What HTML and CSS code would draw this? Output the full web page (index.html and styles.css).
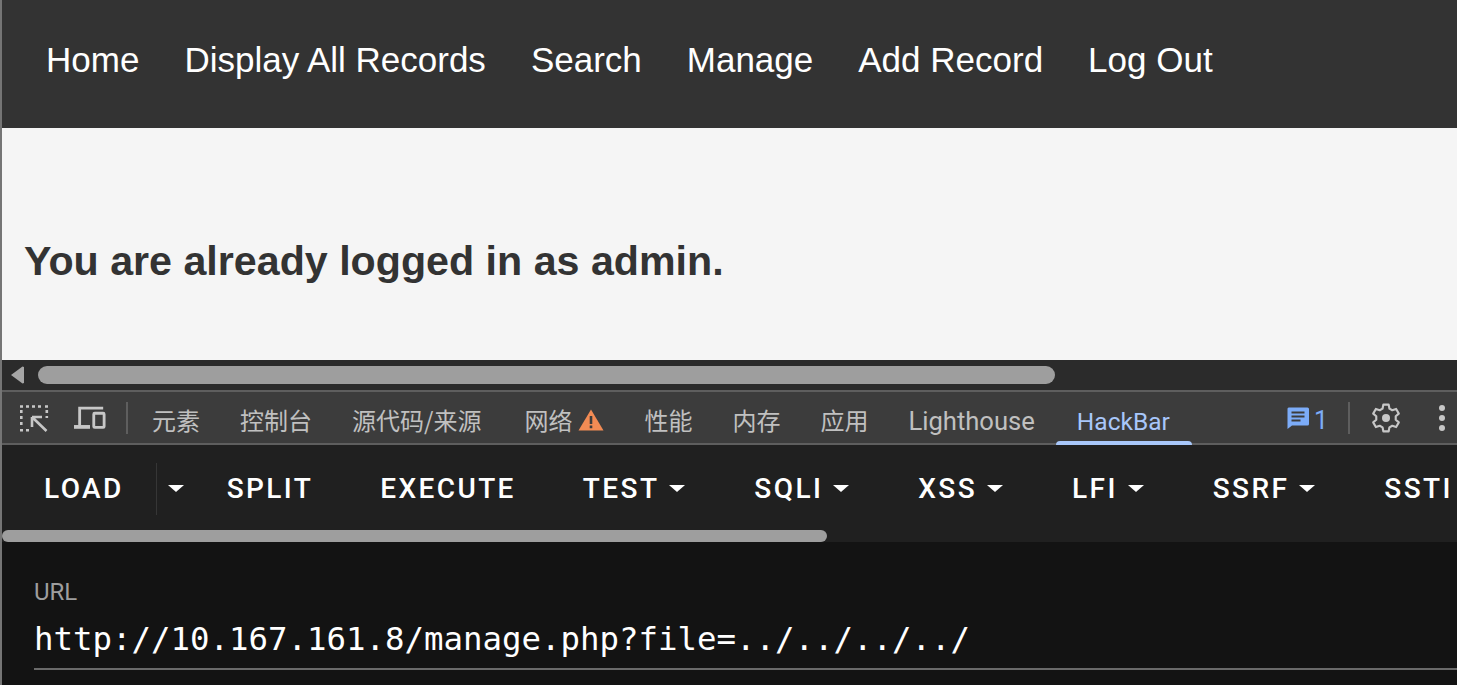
FILE: index.html
```html
<!DOCTYPE html>
<html lang="en">
<head>
    <meta charset="UTF-8">
    <meta name="viewport" content="width=device-width, initial-scale=1.0">
    <title>Manage</title>
    <link rel="stylesheet" href="styles.css">
</head>
<body>
    <div class="window">
        <!-- Страница -->
        <nav class="site-nav">
            <a href="#">Home</a>
            <a href="#">Display All Records</a>
            <a href="#">Search</a>
            <a href="#">Manage</a>
            <a href="#">Add Record</a>
            <a href="#">Log Out</a>
        </nav>
        <main class="content">
            <h2>You are already logged in as admin.</h2>
        </main>
        <div class="page-scroll">
            <svg class="arrow-left" width="15" height="18" viewBox="0 0 15 18"><path d="M14 1 L14 17 L12.500 17.500 L1 9 L12.500 .5 Z" fill="#a6a6a6"/></svg>
            <div class="page-thumb"></div>
        </div>

        <!-- Панель DevTools -->
        <div class="devtools-bar">
            <button class="tool-btn inspect">
                <svg width="30" height="30" viewBox="0 0 30 30" fill="none" stroke="#c7c7c7" stroke-width="2.600">
                    <path d="M1 3.500h3M7 3.500h3M13 3.500h3M19 3.500h3M26 3.500h3M2.300 7v3M2.300 13v3M2.300 19v3M1 27.300h3M7 27.300h3M27.800 7v3M27.800 13v2"/>
                    <path d="M13 14h10M13 14v10M13.500 14.500 L27.500 28"/>
                </svg>
            </button>
            <button class="tool-btn device">
                <svg width="32" height="25" viewBox="0 0 34 26" fill="none" stroke="#c7c7c7" stroke-width="3">
                    <path d="M6 22V3h25"/>
                    <path d="M0 23h17" stroke-width="4"/>
                    <rect x="21" y="8.500" width="11" height="15" rx="1"/>
                </svg>
            </button>
            <span class="bar-sep"></span>
            <div class="tabs">
                <a class="tab" href="#">元素</a>
                <a class="tab" href="#">控制台</a>
                <a class="tab" href="#">源代码/来源</a>
                <a class="tab tab-warn" href="#">网络
                    <svg width="26" height="22" viewBox="0 0 26 22"><path d="M13 .5 L25.500 21.500 H.5 Z" fill="#f28b54"/><path d="M11.700 7h2.600v8h-2.600zM11.700 16.500h2.600v2.800h-2.600z" fill="#3c3c3c"/></svg>
                </a>
                <a class="tab" href="#">性能</a>
                <a class="tab" href="#">内存</a>
                <a class="tab" href="#">应用</a>
                <a class="tab tab-latin tab-lighthouse" href="#">Lighthouse</a>
                <a class="tab tab-latin active" href="#">HackBar</a>
            </div>
            <div class="bar-right">
                <span class="issues">
                    <svg width="22" height="22" viewBox="0 0 22 22"><path d="M2.500 .5h18a1.500 1.500 0 0 1 1.500 1.500v15a1.500 1.500 0 0 1-1.500 1.500H5L.5 22V2A1.500 1.500 0 0 1 2.500 .5z" fill="#7cacf8"/><path d="M4.500 4.500h13v2h-13zM4.500 8.500h13v2h-13zM4.500 12.500h9v2h-9z" fill="#3c3c3c"/></svg>
                    <span class="issues-count">1</span>
                </span>
                <span class="bar-sep"></span>
                <svg class="gear" width="32" height="32" viewBox="0 0 24 24" fill="none" stroke="#c7c7c7" stroke-width="1.600">
                    <path d="M10 2h4l.6 3 2.100 1.200 2.900-1 2 3.500-2.300 2v2.600l2.300 2-2 3.500-2.900-1-2.100 1.200-.6 3h-4l-.6-3-2.100-1.200-2.900 1-2-3.500 2.300-2v-2.600l-2.300-2 2-3.500 2.900 1L9.400 5z" stroke-linejoin="round"/>
                    <circle cx="12" cy="12" r="3" fill="#c7c7c7" stroke="none"/>
                </svg>
                <span class="kebab"><i></i><i></i><i></i></span>
            </div>
        </div>

        <!-- HackBar -->
        <div class="hackbar-menu">
            <button class="hb-btn load">LOAD</button>
            <span class="hb-sep"></span>
            <span class="caret solo"></span>
            <button class="hb-btn">SPLIT</button>
            <button class="hb-btn">EXECUTE</button>
            <button class="hb-btn">TEST<span class="caret"></span></button>
            <button class="hb-btn">SQLI<span class="caret"></span></button>
            <button class="hb-btn">XSS<span class="caret"></span></button>
            <button class="hb-btn">LFI<span class="caret"></span></button>
            <button class="hb-btn">SSRF<span class="caret"></span></button>
            <button class="hb-btn">SSTI</button>
        </div>
        <div class="hackbar-scroll"><div class="hackbar-thumb"></div></div>
        <section class="url-panel">
            <label class="url-label">URL</label>
            <div class="url-input">http://10.167.161.8/manage.php?file=../../../../</div>
        </section>
    </div>
</body>
</html>
```

FILE: styles.css
```css
/* Основные стили */
html, body {
    margin: 0;
    height: 100%;
    overflow: hidden;
}
body {
    background-color: #131313;
}
.window {
    height: 685px;
    border-left: 2px solid #757575;
    display: flex;
    flex-direction: column;
    overflow: hidden;
}
a {
    text-decoration: none;
}
button {
    background: none;
    border: none;
    padding: 0;
    color: inherit;
    font: inherit;
    letter-spacing: inherit;
}

/* Страница */
.site-nav {
    height: 128px;
    flex: none;
    background-color: #333;
    display: flex;
    align-items: center;
    gap: 45px;
    padding: 0 0 8px 44px;
    box-sizing: border-box;
    font-family: "Liberation Sans", Arial, sans-serif;
    font-size: 35px;
}
.site-nav a {
    color: #fff;
}
.content {
    height: 232px;
    flex: none;
    background-color: #f5f5f5;
    display: flex;
    align-items: center;
    padding-left: 22px;
    box-sizing: border-box;
}
.content h2 {
    margin: 34px 0 0;
    font-family: "Liberation Sans", Arial, sans-serif;
    font-size: 41.200px;
    font-weight: bold;
    color: #333;
}
.page-scroll {
    height: 30px;
    flex: none;
    background-color: #2b2b2b;
    display: flex;
    align-items: center;
    padding-left: 8px;
    gap: 13px;
}
.page-thumb {
    width: 1017px;
    height: 18px;
    background-color: #9e9e9e;
    border-radius: 9px;
}

/* Панель DevTools */
.devtools-bar {
    height: 55px;
    flex: none;
    box-sizing: border-box;
    background-color: #3c3c3c;
    border-top: 2px solid #5e5e5e;
    border-bottom: 2px solid #5e5e5e;
    display: flex;
    align-items: center;
    position: relative;
    padding-left: 17px;
    font-family: "Noto Sans CJK SC", Roboto, sans-serif;
}
.tool-btn {
    display: flex;
    align-items: center;
}
.tool-btn.inspect {
    margin-right: 25px;
}
.tool-btn.device {
    margin-right: 20px;
}
.bar-sep {
    width: 2px;
    height: 32px;
    background-color: #5e5e5e;
    flex: none;
}
.tabs {
    display: flex;
    align-self: stretch;
    margin-left: 4px;
}
.tab {
    display: flex;
    align-items: center;
    gap: 6px;
    padding: 4px 20px 0;
    color: #c0c0c0;
    font-size: 24px;
    position: relative;
}
.tab-warn {
    margin-left: 3px;
}
.tab-latin {
    font-family: Roboto, sans-serif;
    font-size: 24.500px;
    padding-top: 7px;
}
.tab-lighthouse {
    font-size: 25.600px;
}
.tab.active {
    color: #a8c7fa;
    margin-left: 1px;
    padding: 7px 22px 0 21px;
}
.tab.active::after {
    content: "";
    position: absolute;
    left: 0;
    right: 0;
    bottom: -2px;
    height: 4px;
    background-color: #a8c7fa;
    border-radius: 4px 4px 0 0;
}
.bar-right {
    margin-left: auto;
    display: flex;
    align-items: center;
    padding-right: 12px;
}
.issues {
    display: flex;
    align-items: center;
    gap: 5px;
    color: #7cacf8;
    font-family: Roboto, sans-serif;
    font-size: 25px;
    margin-right: 20px;
}
.issues-count {
    padding-top: 5px;
}
.gear {
    margin-left: 20px;
}
.kebab {
    display: flex;
    flex-direction: column;
    gap: 4px;
    margin-left: 37px;
}
.kebab i {
    display: block;
    width: 6px;
    height: 6px;
    border-radius: 50%;
    background-color: #c7c7c7;
}

/* HackBar */
.hackbar-menu {
    height: 85px;
    flex: none;
    background-color: #202020;
    display: flex;
    align-items: center;
    padding: 2px 0 0 42px;
    box-sizing: border-box;
    font-family: Roboto, sans-serif;
    font-size: 28px;
    font-weight: 500;
    letter-spacing: 2.400px;
    color: #fff;
    white-space: nowrap;
}
.hb-btn {
    display: flex;
    align-items: center;
    margin-right: 67px;
}
.hb-btn.load {
    margin-right: 32px;
}
.hb-sep {
    width: 1px;
    height: 52px;
    background-color: #363636;
    flex: none;
}
.caret {
    width: 0;
    height: 0;
    border-left: 8px solid transparent;
    border-right: 8px solid transparent;
    border-top: 7px solid #fff;
    margin: 0 2px 0 10px;
}
.caret.solo {
    margin: 0 43px 0 11px;
}
.hackbar-scroll {
    height: 12px;
    flex: none;
    background-color: #202020;
}
.hackbar-thumb {
    width: 825px;
    height: 12px;
    background-color: #9e9e9e;
    border-radius: 6px;
}
.url-panel {
    flex: 1;
    background-color: #131313;
    padding: 36px 0 0 32px;
}
.url-label {
    display: block;
    font-family: Roboto, sans-serif;
    font-size: 24px;
    line-height: 28px;
    color: #9e9e9e;
}
.url-input {
    margin-top: 12px;
    padding-bottom: 8px;
    border-bottom: 2px solid #6a6a6a;
    font-family: "DejaVu Sans Mono", monospace;
    font-size: 32.400px;
    line-height: 42px;
    color: #fff;
    white-space: nowrap;
}
```
